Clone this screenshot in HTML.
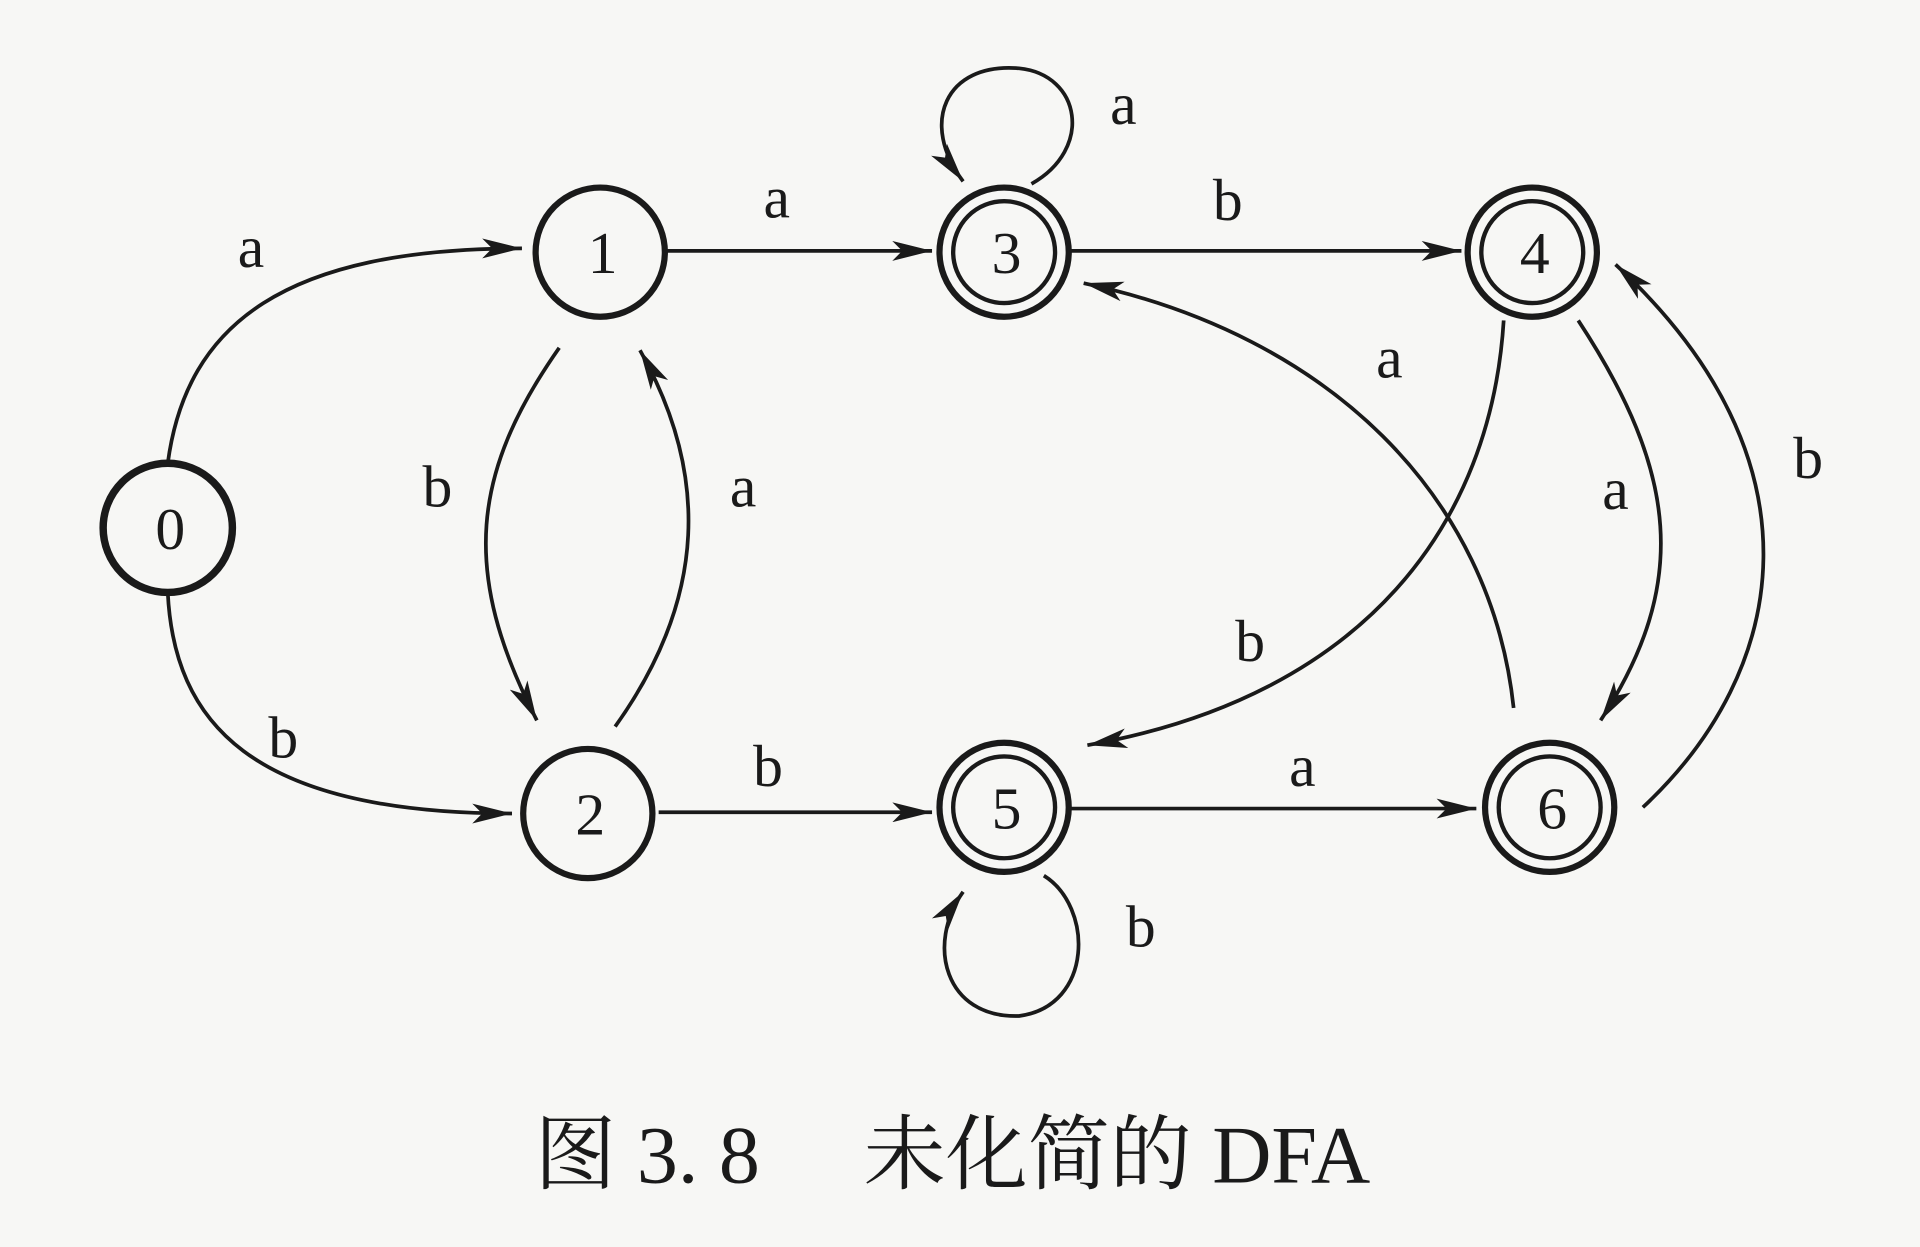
<!DOCTYPE html>
<html><head><meta charset="utf-8"><style>
html,body{margin:0;padding:0;background:#f7f7f5;}
svg{display:block;}
text{font-family:"Liberation Serif","Noto Serif CJK SC",serif;fill:#1a1a1a;}
</style></head><body>
<svg width="1920" height="1247" viewBox="0 0 1545 1004" preserveAspectRatio="none" xmlns="http://www.w3.org/2000/svg">
<defs>
<marker id="ar" viewBox="0 0 20 10" refX="20" refY="5" markerWidth="34" markerHeight="16" markerUnits="userSpaceOnUse" orient="auto">
<path d="M0,0 L20,5 L0,10 L5,5 Z" fill="#1a1a1a"/>
</marker>
</defs>
<rect width="1545" height="1004" fill="#f7f7f5"/>
<g stroke="#1a1a1a" fill="none">
<circle cx="135" cy="425" r="52" stroke-width="6"/>
<circle cx="483" cy="203" r="52" stroke-width="5"/>
<circle cx="473" cy="655" r="52" stroke-width="5"/>
<circle cx="808" cy="203" r="52" stroke-width="5"/><circle cx="808" cy="203" r="41" stroke-width="3.5"/>
<circle cx="1233" cy="203" r="52" stroke-width="5"/><circle cx="1233" cy="203" r="41" stroke-width="3.5"/>
<circle cx="808" cy="650" r="52" stroke-width="5"/><circle cx="808" cy="650" r="41" stroke-width="3.5"/>
<circle cx="1247" cy="650" r="52" stroke-width="5"/><circle cx="1247" cy="650" r="41" stroke-width="3.5"/>
<g stroke-width="3" marker-end="url(#ar)">
<path d="M135,373 C150,260 230,200 420,200"/>
<path d="M135,477 C140,580 200,655 412,655"/>
<path d="M537,202 L750,202"/>
<path d="M862,202 L1176,202"/>
<path d="M530,654 L750,654"/>
<path d="M862,651 L1188,651"/>
<path d="M450,280 C380,380 370,460 432,580"/>
<path d="M495,585 C570,480 570,380 515,282"/>
<path d="M1210,258 C1200,420 1100,560 875,600"/>
<path d="M1218,570 C1200,400 1070,270 872,228"/>
<path d="M1270,258 C1350,380 1360,470 1288,580"/>
<path d="M1322,650 C1440,540 1470,370 1300,213"/>
<path d="M830,148 C880,120 870,60 820,55 C760,50 740,100 775,146"/>
<path d="M840,705 C880,730 880,810 820,818 C760,820 745,760 775,718"/>
</g>
</g>
<g font-size="48" text-anchor="middle">
<text x="137" y="442">0</text>
<text x="485" y="220">1</text>
<text x="475" y="672">2</text>
<text x="810" y="220">3</text>
<text x="1235" y="220">4</text>
<text x="810" y="667">5</text>
<text x="1249" y="667">6</text>
</g>
<g font-size="48" text-anchor="middle">
<text x="202" y="215">a</text>
<text x="228" y="610">b</text>
<text x="625" y="175">a</text>
<text x="988" y="177">b</text>
<text x="904" y="100">a</text>
<text x="352" y="408">b</text>
<text x="598" y="408">a</text>
<text x="618" y="633">b</text>
<text x="1048" y="633">a</text>
<text x="1118" y="304">a</text>
<text x="1006" y="532">b</text>
<text x="1300" y="410">a</text>
<text x="1455" y="385">b</text>
<text x="918" y="762">b</text>
</g>
<text x="430" y="952" font-size="66">图 3. 8</text>
<text x="695" y="952" font-size="66">未化简的 DFA</text>
</svg>
</body></html>
